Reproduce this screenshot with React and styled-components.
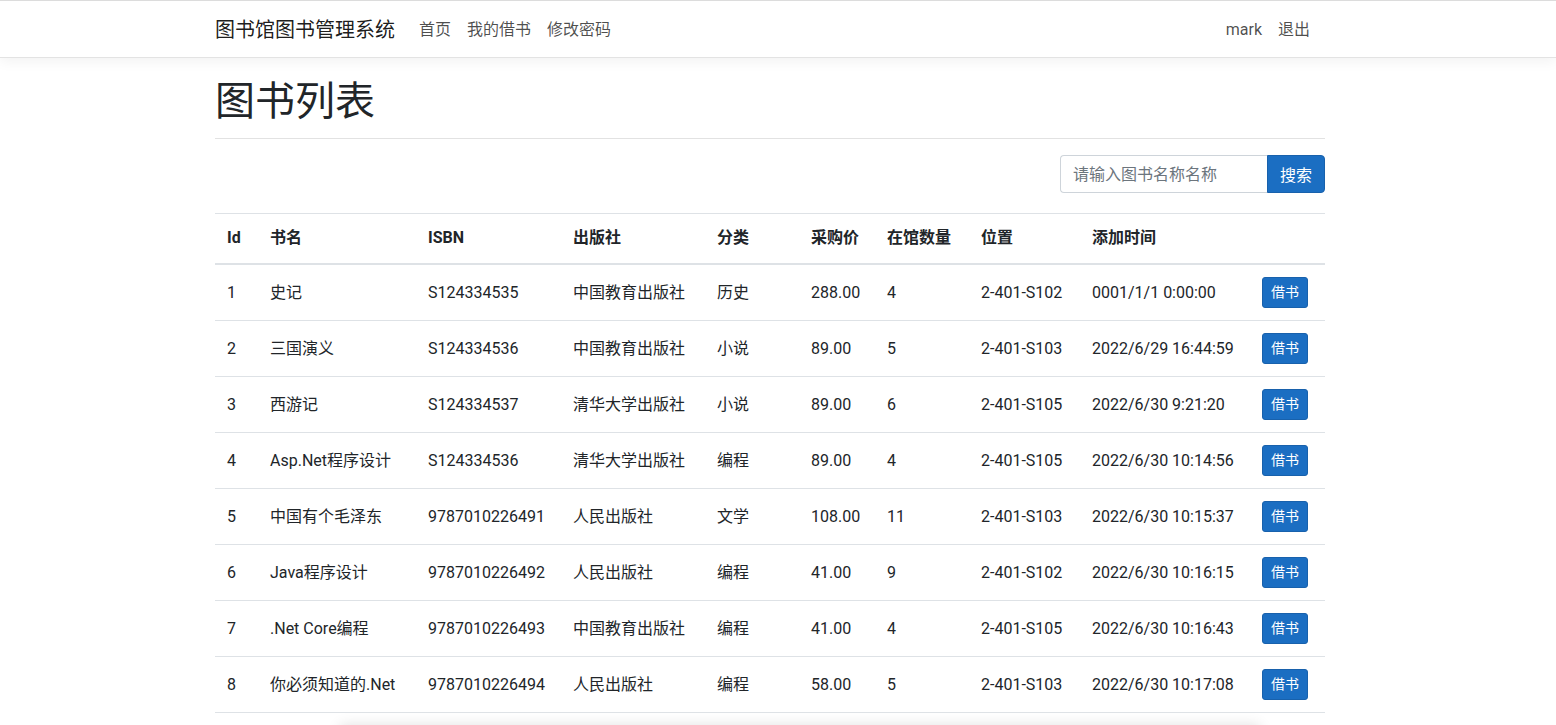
import React from "react";
import styled, { createGlobalStyle } from "styled-components";

const Global = createGlobalStyle`
  html, body { margin: 0; padding: 0; background: #fff; }
  body {
    font-family: Roboto, "Noto Sans CJK SC", sans-serif;
    font-size: 16px;
    line-height: 1.5;
    color: #212529;
  }
  * { box-sizing: border-box; }
`;

const Navbar = styled.nav`
  border-top: 1px solid #dcdcdc;
  border-bottom: 1px solid #e3e3e3;
  box-shadow: 0 4px 12px rgba(0, 0, 0, 0.05);
  background: #fff;
  height: 58px;
`;

const Container = styled.div`
  width: 1110px;
  margin: 0 auto;
  transform: translateX(-8px);
`;

const NavInner = styled(Container)`
  height: 100%;
  display: flex;
  align-items: center;
  padding-top: 2px;
`;

const Brand = styled.a`
  font-size: 20px;
  color: rgba(0, 0, 0, 0.9);
  margin-right: 16px;
  line-height: 30px;
  text-decoration: none;
`;

const NavList = styled.div`
  display: flex;
  align-items: center;
  margin-left: ${(p) => (p.$right ? "auto" : "0")};
  margin-right: ${(p) => (p.$right ? "7px" : "0")};
`;

const NavLink = styled.a`
  padding: 8px;
  color: rgba(0, 0, 0, 0.7);
  font-size: 16px;
  text-decoration: none;
`;

const Main = styled(Container)`
  padding-top: 20px;
`;

const PageHeader = styled.div`
  border-bottom: 1px solid #e2e2e2;
  padding-bottom: 12px;
`;

const Title = styled.h1`
  margin: 0;
  font-size: 40px;
  font-weight: 400;
  line-height: 48px;
  color: #212529;
`;

const SearchBar = styled.form`
  display: flex;
  justify-content: flex-end;
  margin: 16px 0 20px;
`;

const SearchInput = styled.input`
  width: 207px;
  height: 38px;
  padding: 6px 12px;
  font-size: 16px;
  font-family: inherit;
  color: #495057;
  border: 1px solid #ced4da;
  border-right: none;
  border-radius: 4px 0 0 4px;
  outline: none;
  &::placeholder { color: #6c757d; }
`;

const SearchButton = styled.button`
  height: 38px;
  padding: 0 12px;
  font-size: 16px;
  font-family: inherit;
  color: #fff;
  background: #1b6ec2;
  border: 1px solid #1861ac;
  border-radius: 0 4px 4px 0;
`;

const Table = styled.table`
  width: 100%;
  border-collapse: collapse;
  table-layout: fixed;
`;

const Th = styled.th`
  text-align: left;
  font-weight: 700;
  padding: 12px 12px 13px;
  line-height: 24px;
  border-top: 1px solid #dee2e6;
  border-bottom: 2px solid #dee2e6;
  white-space: nowrap;
`;

const Td = styled.td`
  padding: 12px;
  line-height: 24px;
  border-top: 1px solid #dee2e6;
  white-space: nowrap;
  vertical-align: middle;
  height: 56px;
`;

const BorrowButton = styled.button`
  font-family: inherit;
  font-size: 14px;
  line-height: 21px;
  padding: 4px 8px;
  color: #fff;
  background: #1b6ec2;
  border: 1px solid #1861ac;
  border-radius: 3px;
`;

const FooterShadow = styled.div`
  position: fixed;
  left: 340px;
  width: 920px;
  bottom: -40px;
  height: 40px;
  background: #fff;
  box-shadow: 0 0 14px rgba(0, 0, 0, 0.12);
`;

const cols = [43, 158, 145, 144, 94, 76, 94, 111, 170, 75];
const heads = ["Id", "书名", "ISBN", "出版社", "分类", "采购价", "在馆数量", "位置", "添加时间", ""];

const books = [
  [1, "史记", "S124334535", "中国教育出版社", "历史", "288.00", 4, "2-401-S102", "0001/1/1 0:00:00"],
  [2, "三国演义", "S124334536", "中国教育出版社", "小说", "89.00", 5, "2-401-S103", "2022/6/29 16:44:59"],
  [3, "西游记", "S124334537", "清华大学出版社", "小说", "89.00", 6, "2-401-S105", "2022/6/30 9:21:20"],
  [4, "Asp.Net程序设计", "S124334536", "清华大学出版社", "编程", "89.00", 4, "2-401-S105", "2022/6/30 10:14:56"],
  [5, "中国有个毛泽东", "9787010226491", "人民出版社", "文学", "108.00", 11, "2-401-S103", "2022/6/30 10:15:37"],
  [6, "Java程序设计", "9787010226492", "人民出版社", "编程", "41.00", 9, "2-401-S102", "2022/6/30 10:16:15"],
  [7, ".Net Core编程", "9787010226493", "中国教育出版社", "编程", "41.00", 4, "2-401-S105", "2022/6/30 10:16:43"],
  [8, "你必须知道的.Net", "9787010226494", "人民出版社", "编程", "58.00", 5, "2-401-S103", "2022/6/30 10:17:08"],
  [9, "C#程序设计", "9787010226495", "清华大学出版社", "编程", "62.00", 3, "2-401-S104", "2022/6/30 10:17:36"],
];

export default function App() {
  return (
    <>
      <Global />
      <Navbar>
        <NavInner>
          <Brand href="#">图书馆图书管理系统</Brand>
          <NavList>
            <NavLink href="#">首页</NavLink>
            <NavLink href="#">我的借书</NavLink>
            <NavLink href="#">修改密码</NavLink>
          </NavList>
          <NavList $right>
            <NavLink href="#">mark</NavLink>
            <NavLink href="#">退出</NavLink>
          </NavList>
        </NavInner>
      </Navbar>
      <Main>
        <PageHeader>
          <Title>图书列表</Title>
        </PageHeader>
        <SearchBar onSubmit={(e) => e.preventDefault()}>
          <SearchInput placeholder="请输入图书名称名称" />
          <SearchButton type="submit">搜索</SearchButton>
        </SearchBar>
        <Table>
          <colgroup>
            {cols.map((w, i) => (
              <col key={i} style={{ width: w }} />
            ))}
          </colgroup>
          <thead>
            <tr>
              {heads.map((h, i) => (
                <Th key={i}>{h}</Th>
              ))}
            </tr>
          </thead>
          <tbody>
            {books.map((b) => (
              <tr key={b[0]}>
                {b.map((v, i) => (
                  <Td key={i}>{v}</Td>
                ))}
                <Td>
                  <BorrowButton>借书</BorrowButton>
                </Td>
              </tr>
            ))}
          </tbody>
        </Table>
      </Main>
      <FooterShadow />
    </>
  );
}
